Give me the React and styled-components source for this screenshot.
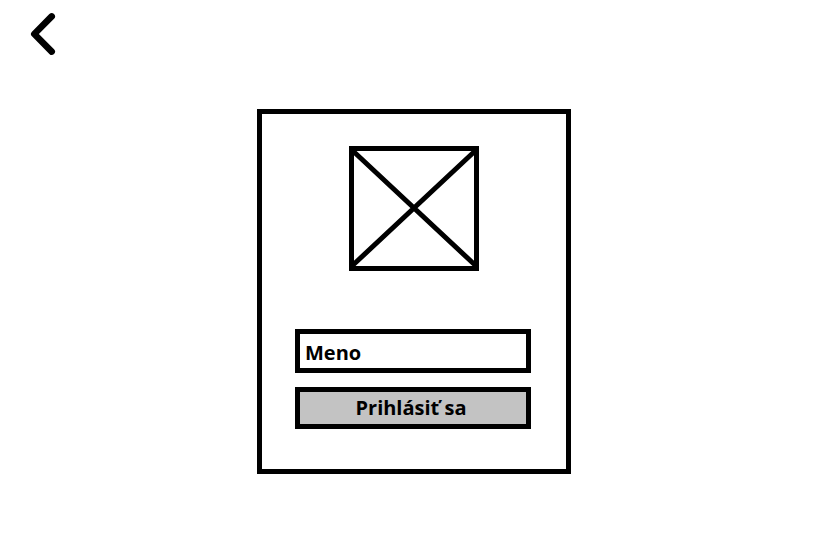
import React from "react";
import styled, { createGlobalStyle } from "styled-components";

const GlobalStyle = createGlobalStyle`
  *, *::before, *::after { box-sizing: border-box; }
  body { margin: 0; background: #fff; color: #000; font-family: "Open Sans", Lato, sans-serif; }
`;

const Page = styled.div`
  display: flex;
  flex-direction: column;
  min-height: 100vh;
`;

const Header = styled.header`
  display: flex;
  padding: 12px 30px 0;
`;

const BackButton = styled.button`
  display: flex;
  padding: 0;
  border: 0;
  background: none;
  color: inherit;
  cursor: pointer;
`;

const Main = styled.main`
  display: flex;
  justify-content: center;
  padding: 53px 0 16px 15px;
`;

const Card = styled.section`
  display: flex;
  flex-direction: column;
  gap: 58px;
  width: 100%;
  max-width: 314px;
  padding: 32px 33px 40px;
  border: 5px solid #000;
`;

const Picture = styled.svg`
  display: block;
  align-self: center;
`;

const Form = styled.form`
  display: flex;
  flex-direction: column;
  gap: 14px;
  padding-right: 2px;
`;

const controlStyle = `
  width: 100%;
  border: 5px solid #000;
  border-radius: 0;
  color: #000;
  font-family: inherit;
  font-size: 20px;
  font-weight: 700;
  line-height: 26px;
`;

const NameInput = styled.input`
  ${controlStyle}
  height: 44px;
  padding: 2px 5px 0;
  background: #fff;

  &::placeholder { color: #000; opacity: 1; }
`;

const SubmitButton = styled.button`
  ${controlStyle}
  height: 42px;
  padding: 0 4px 0 0;
  background: #c3c3c3;
  text-align: center;
  cursor: pointer;
`;

export default function App() {
  return (
    <Page>
      <GlobalStyle />
      <Header>
        <BackButton type="button" aria-label="Späť">
          <svg width="26" height="44" viewBox="0 0 26 44" fill="none" stroke="currentColor" strokeWidth="6.6" strokeLinecap="round" strokeLinejoin="round" aria-hidden="true">
            <path d="M21.7 4.4 4.3 22 21.7 39.6" />
          </svg>
        </BackButton>
      </Header>
      <Main>
        <Card>
          <Picture width="130" height="125" viewBox="0 0 130 125" fill="none" stroke="#000" strokeWidth="5" aria-hidden="true">
            <rect x="2.5" y="2.5" width="125" height="120" />
            <path d="M4 5 126 119M126 5 4 119" />
          </Picture>
          <Form onSubmit={(event) => event.preventDefault()}>
            <NameInput type="text" name="meno" placeholder="Meno" aria-label="Meno" />
            <SubmitButton type="submit">Prihlásiť sa</SubmitButton>
          </Form>
        </Card>
      </Main>
    </Page>
  );
}
